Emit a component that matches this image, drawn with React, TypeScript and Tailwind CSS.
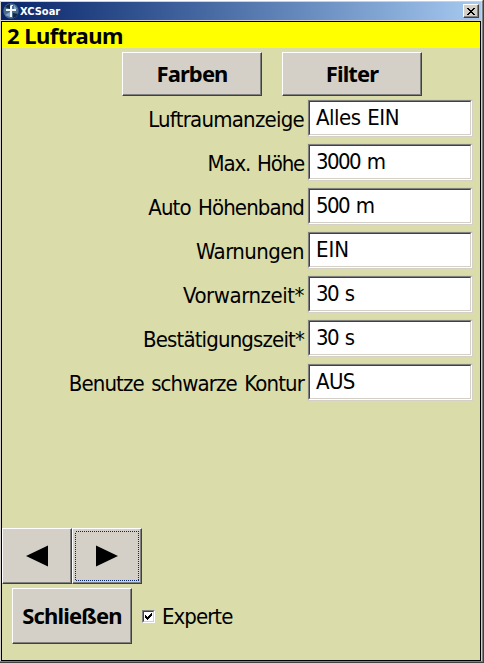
import React from "react";

const RAISED =
  "border border-t-white border-l-white border-r-[#404040] border-b-[#404040] bg-[#d4d0c8] shadow-[inset_-1px_-1px_0_#808080] flex items-center justify-center";

const BOLD = "font-['Noto_Sans','DejaVu_Sans_Condensed',sans-serif] font-bold";

function Field({ label, value, labelClass, valueClass }: { label: string; value: string; labelClass: string; valueClass: string }) {
  return (
    <div className="flex h-[38px] items-start">
      <div className={`w-[303px] shrink-0 pt-[5px] pr-px text-right leading-[32px] whitespace-nowrap ${labelClass}`}>{label}</div>
      <div className="ml-[2px] h-[38px] w-[166px] border border-[#d4d0c8]">
        <div className="h-full border border-t-[#808080] border-l-[#808080] border-r-white border-b-white">
          <div className="h-full border border-t-[#404040] border-l-[#404040] border-r-[#d4d0c8] border-b-[#d4d0c8] bg-white pl-[6px] leading-[32px] whitespace-nowrap">
            <span className={valueClass}>{value}</span>
          </div>
        </div>
      </div>
    </div>
  );
}

const fields = [
  { label: "Luftraumanzeige", value: "Alles EIN", labelClass: "tracking-[-0.75px]", valueClass: "tracking-[-0.5px] [word-spacing:1px]" },
  { label: "Max. Höhe", value: "3000 m", labelClass: "tracking-[-1.2px] [word-spacing:2px]", valueClass: "tracking-[-1.6px] [word-spacing:2px]" },
  { label: "Auto Höhenband", value: "500 m", labelClass: "tracking-[-0.9px] [word-spacing:2px]", valueClass: "tracking-[-1.6px] [word-spacing:2px]" },
  { label: "Warnungen", value: "EIN", labelClass: "tracking-[-0.55px]", valueClass: "tracking-[0px]" },
  { label: "Vorwarnzeit*", value: "30 s", labelClass: "tracking-[-0.45px]", valueClass: "tracking-[-1.6px] [word-spacing:2px]" },
  { label: "Bestätigungszeit*", value: "30 s", labelClass: "tracking-[-0.85px]", valueClass: "tracking-[-1.6px] [word-spacing:2px]" },
  { label: "Benutze schwarze Kontur", value: "AUS", labelClass: "tracking-[-0.88px] [word-spacing:2px]", valueClass: "tracking-[-0.6px]" },
];

export default function App() {
  return (
    <div className="h-[663px] w-[484px] overflow-hidden border-r border-b border-[#404040] bg-[#d4d0c8] font-['DejaVu_Sans_Condensed','DejaVu_Sans',sans-serif] text-[22px] text-black">
      <div className="flex h-[662px] w-[483px] flex-col border-t border-r border-b border-t-white border-r-[#808080] border-b-[#808080] pr-px pl-px">
        <div className="mt-px flex h-[18px] shrink-0 items-center bg-linear-to-r from-[#0a246a] to-[#a6caf0] pr-[2px] pl-[2px]">
          <svg width="16" height="16" viewBox="0 0 16 16" className="shrink-0">
            <circle cx="8" cy="8" r="7.7" fill="#4a6c8e" />
            <path d="M2 4a8 8 0 0 1 5-3v5zM10 10l5 1a8 8 0 0 1-5 4z" fill="#16283d" />
            <path d="M2 12l5-3v5zM11 2l3 4-3 1z" fill="#86a7c6" />
            <path d="M8 2h2v1H9v3h4v2H9v6H7V8H3V6h4V3z" fill="#f2f5f7" />
          </svg>
          <span className="ml-px flex-1 pt-px text-[11px] leading-[16px] font-bold text-white">XCSoar</span>
          <button className={`h-[14px] w-[16px] ${RAISED}`}>
            <svg width="8" height="7" viewBox="0 0 8 7" shapeRendering="crispEdges">
              <path d="M0 0h2v1h1v1h2V1h1V0h2v1H7v1H6v1H5v1h1v1h1v1h1v1H6V6H5V5H3v1H2v1H0V6h1V5h1V4h1V3H2V2H1V1H0z" />
            </svg>
          </button>
        </div>
        <div className="mt-px flex h-[640px] w-[480px] shrink-0 flex-col border border-black bg-[#dadcaa]">
          <div className={`h-[26px] shrink-0 bg-[#ffff00] pl-[5px] leading-[26px] tracking-[-0.55px] ${BOLD}`}>
            2 Luftraum
          </div>
          <div className={`mt-[4px] flex gap-[20px] pl-[120px] tracking-[-0.9px] ${BOLD}`}>
            <button className={`h-[44px] w-[140px] pb-[2px] ${RAISED}`}>Farben</button>
            <button className={`h-[44px] w-[140px] pb-[2px] ${RAISED}`}>Filter</button>
          </div>
          <div className="mt-[3px] flex flex-col gap-[6px]">
            {fields.map((f) => (
              <Field key={f.label} {...f} />
            ))}
          </div>
          <div className="mt-auto flex">
            <button className={`h-[56px] w-[70px] ${RAISED}`}>
              <svg width="22" height="22" viewBox="0 0 22 22"><path d="M0 11L22 0.5v21z" /></svg>
            </button>
            <button className={`relative h-[56px] w-[70px] ${RAISED}`}>
              <svg width="22" height="22" viewBox="0 0 22 22"><path d="M22 11L0 0.5v21z" /></svg>
              <svg className="absolute top-[2px] left-[2px]" width="64" height="50" shapeRendering="crispEdges">
                <rect x=".5" y=".5" width="63" height="49" fill="none" stroke="#0a246a" strokeDasharray="1 1" />
              </svg>
            </button>
          </div>
          <div className="mt-[4px] mb-[16px] flex items-center pl-[10px]">
            <button className={`h-[56px] w-[120px] pb-[2px] tracking-[-0.85px] ${BOLD} ${RAISED}`}>Schließen</button>
            <div className="ml-[10px] h-[13px] w-[13px] border border-[#808080] border-r-white border-b-white">
              <div className="h-[11px] w-[11px] border border-t-[#404040] border-l-[#404040] border-r-[#d4d0c8] border-b-[#d4d0c8] bg-white">
                <svg width="9" height="9" viewBox="0 0 9 9" shapeRendering="crispEdges">
                  <path d="M1 3h1v1h1v1h1V4h1V3h1V2h1V1h1v3H7v1H6v1H5v1H4v1H3V7H2V6H1z" />
                </svg>
              </div>
            </div>
            <span className="ml-[7px] tracking-[-0.95px]">Experte</span>
          </div>
        </div>
      </div>
    </div>
  );
}
